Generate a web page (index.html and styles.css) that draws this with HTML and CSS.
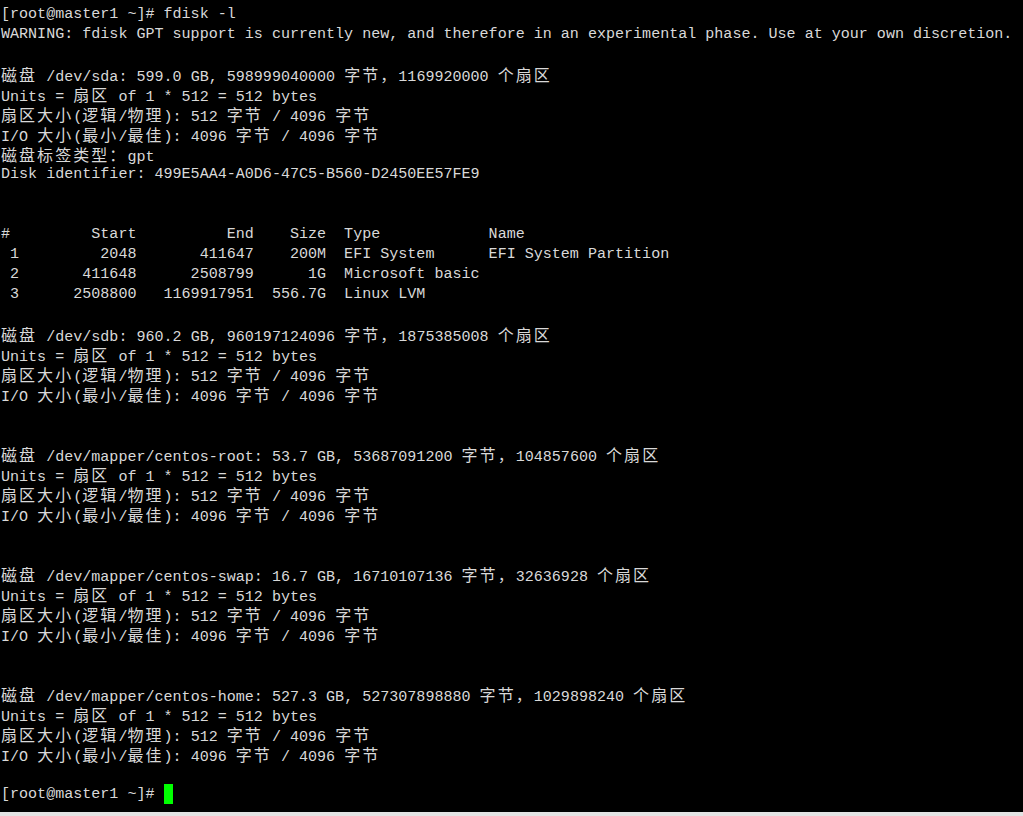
FILE: index.html
```html
<!DOCTYPE html>
<html lang="zh">
<head>
<meta charset="utf-8">
<title>fdisk -l</title>
<link rel="stylesheet" href="styles.css">
</head>
<body>
<div class="term">
<div class="ln">[root@master1 ~]# fdisk -l</div>
<div class="ln">WARNING: fdisk GPT support is currently new, and therefore in an experimental phase. Use at your own discretion.</div>
<div class="ln"></div>
<div class="ln"><span class="w">磁盘</span> /dev/sda: 599.0 GB, 598999040000 <span class="w">字节，</span>1169920000 <span class="w">个扇区</span></div>
<div class="ln">Units = <span class="w">扇区</span> of 1 * 512 = 512 bytes</div>
<div class="ln"><span class="w">扇区大小</span>(<span class="w">逻辑</span>/<span class="w">物理</span>): 512 <span class="w">字节</span> / 4096 <span class="w">字节</span></div>
<div class="ln">I/O <span class="w">大小</span>(<span class="w">最小</span>/<span class="w">最佳</span>): 4096 <span class="w">字节</span> / 4096 <span class="w">字节</span></div>
<div class="ln"><span class="w">磁盘标签类型：</span>gpt</div>
<div class="ln">Disk identifier: 499E5AA4-A0D6-47C5-B560-D2450EE57FE9</div>
<div class="ln"></div>
<div class="ln"></div>
<div class="ln">#         Start          End    Size  Type            Name</div>
<div class="ln"> 1         2048       411647    200M  EFI System      EFI System Partition</div>
<div class="ln"> 2       411648      2508799      1G  Microsoft basic </div>
<div class="ln"> 3      2508800   1169917951  556.7G  Linux LVM       </div>
<div class="ln"></div>
<div class="ln"><span class="w">磁盘</span> /dev/sdb: 960.2 GB, 960197124096 <span class="w">字节，</span>1875385008 <span class="w">个扇区</span></div>
<div class="ln">Units = <span class="w">扇区</span> of 1 * 512 = 512 bytes</div>
<div class="ln"><span class="w">扇区大小</span>(<span class="w">逻辑</span>/<span class="w">物理</span>): 512 <span class="w">字节</span> / 4096 <span class="w">字节</span></div>
<div class="ln">I/O <span class="w">大小</span>(<span class="w">最小</span>/<span class="w">最佳</span>): 4096 <span class="w">字节</span> / 4096 <span class="w">字节</span></div>
<div class="ln"></div>
<div class="ln"></div>
<div class="ln"><span class="w">磁盘</span> /dev/mapper/centos-root: 53.7 GB, 53687091200 <span class="w">字节，</span>104857600 <span class="w">个扇区</span></div>
<div class="ln">Units = <span class="w">扇区</span> of 1 * 512 = 512 bytes</div>
<div class="ln"><span class="w">扇区大小</span>(<span class="w">逻辑</span>/<span class="w">物理</span>): 512 <span class="w">字节</span> / 4096 <span class="w">字节</span></div>
<div class="ln">I/O <span class="w">大小</span>(<span class="w">最小</span>/<span class="w">最佳</span>): 4096 <span class="w">字节</span> / 4096 <span class="w">字节</span></div>
<div class="ln"></div>
<div class="ln"></div>
<div class="ln"><span class="w">磁盘</span> /dev/mapper/centos-swap: 16.7 GB, 16710107136 <span class="w">字节，</span>32636928 <span class="w">个扇区</span></div>
<div class="ln">Units = <span class="w">扇区</span> of 1 * 512 = 512 bytes</div>
<div class="ln"><span class="w">扇区大小</span>(<span class="w">逻辑</span>/<span class="w">物理</span>): 512 <span class="w">字节</span> / 4096 <span class="w">字节</span></div>
<div class="ln">I/O <span class="w">大小</span>(<span class="w">最小</span>/<span class="w">最佳</span>): 4096 <span class="w">字节</span> / 4096 <span class="w">字节</span></div>
<div class="ln"></div>
<div class="ln"></div>
<div class="ln"><span class="w">磁盘</span> /dev/mapper/centos-home: 527.3 GB, 527307898880 <span class="w">字节，</span>1029898240 <span class="w">个扇区</span></div>
<div class="ln">Units = <span class="w">扇区</span> of 1 * 512 = 512 bytes</div>
<div class="ln"><span class="w">扇区大小</span>(<span class="w">逻辑</span>/<span class="w">物理</span>): 512 <span class="w">字节</span> / 4096 <span class="w">字节</span></div>
<div class="ln">I/O <span class="w">大小</span>(<span class="w">最小</span>/<span class="w">最佳</span>): 4096 <span class="w">字节</span> / 4096 <span class="w">字节</span></div>
<div class="ln"></div>
<div class="ln">[root@master1 ~]# <span class="cursor"> </span></div>
</div>
</body>
</html>
```
FILE: styles.css
```css
:root {
  --cw: 9.03px;
}
html, body {
  margin: 0;
  padding: 0;
  background: #e3e3e3;
}
body {
  width: 1023px;
  height: 816px;
  overflow: hidden;
}
.term {
  height: 812px;
  box-sizing: border-box;
  background: #000;
  color: #d9d9d9;
  padding: 4px 0 0 1px;
  display: flex;
  flex-direction: column;
  font-family: "Liberation Mono", monospace;
  font-size: 15.05px;
  overflow: hidden;
}
.ln {
  height: 20px;
  line-height: 20px;
  white-space: pre;
  flex: none;
}
.w {
  display: inline-block;
  height: 20px;
  vertical-align: baseline;
  font-family: "Noto Sans CJK SC", sans-serif;
  font-size: 16px;
  line-height: 20px;
  letter-spacing: calc(var(--cw) * 2 - 16px);
}
.cursor {
  display: inline-block;
  width: 9px;
  height: 20px;
  vertical-align: top;
  background: #00ff00;
}
```
